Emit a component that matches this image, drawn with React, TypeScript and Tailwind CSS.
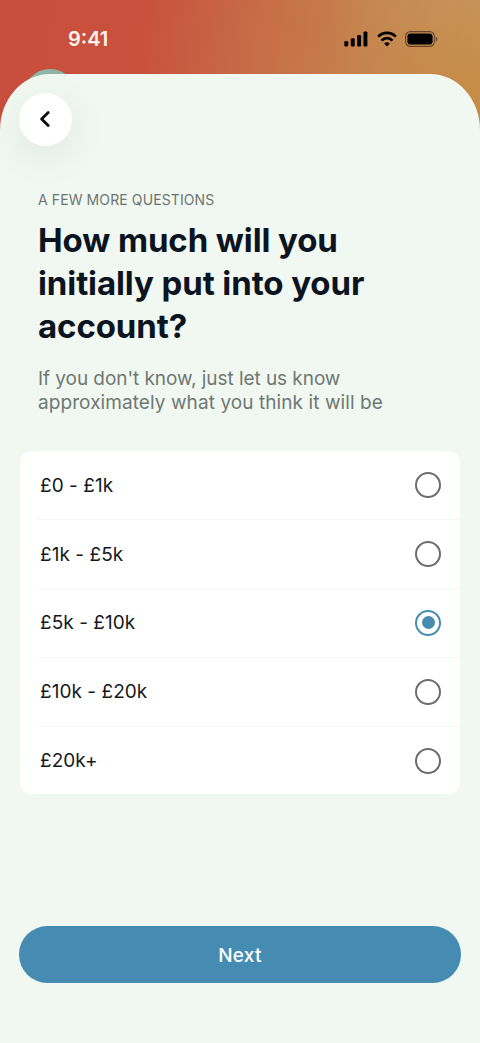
import { useState } from "react";

const OPTIONS = ["£0 - £1k", "£1k - £5k", "£5k - £10k", "£10k - £20k", "£20k+"];

function StatusBar() {
  return (
    <header className="flex h-[74px] items-start justify-between pl-[68px] pr-[42px] pt-[26px]">
      <span className="text-[20px] font-semibold leading-[26px] text-[#fff3ee]">
        9:41
      </span>
      <div className="flex items-center gap-[8px] pt-[4.5px]">
        <svg width="25" height="16" viewBox="0 0 25 16" fill="#000">
          <rect x="0.3" y="10" width="3.9" height="5.5" rx="1.2" />
          <rect x="6.8" y="7.2" width="3.9" height="8.3" rx="1.2" />
          <rect x="13.2" y="4" width="3.9" height="11.5" rx="1.2" />
          <rect x="19.5" y="0.4" width="3.9" height="15.1" rx="1.2" />
        </svg>
        <svg width="20" height="16" viewBox="0 0 21 16" preserveAspectRatio="none" fill="none" stroke="#000" strokeWidth="2.7">
          <path d="M1.2 5.6a13.4 13.4 0 0 1 18.6 0" />
          <path d="M4.8 9.6a8 8 0 0 1 11.4 0" />
          <path d="M10.5 15.4l-3-2.9a4.2 4.2 0 0 1 6 0z" fill="#000" stroke="none" />
        </svg>
        <svg width="33" height="16" viewBox="0 0 33 16">
          <rect x="0.6" y="0.6" width="28.8" height="14.8" rx="4.8" fill="none" stroke="#000" strokeOpacity="0.5" strokeWidth="1.1" />
          <rect x="2.4" y="2.4" width="25.2" height="11.2" rx="3.4" fill="#000" />
          <path d="M30.8 5.4c2 .9 2 4.3 0 5.2z" fill="#000" fillOpacity="0.5" />
        </svg>
      </div>
    </header>
  );
}

function Radio({ checked }: { checked: boolean }) {
  return (
    <span
      className={`flex size-[26px] items-center justify-center rounded-full border-2 ${
        checked ? "border-[#468cb2]" : "border-[#6b6d6e]"
      }`}
    >
      {checked && <span className="size-[13px] rounded-full bg-[#468cb2]" />}
    </span>
  );
}

export default function App() {
  const [selected, setSelected] = useState(2);

  return (
    <div className="relative flex h-[1043px] w-[480px] flex-col overflow-hidden bg-[#c8503c] font-['Inter',sans-serif]">
      <div className="absolute inset-x-0 top-0 h-[140px] bg-[linear-gradient(97deg,#c84f3d_0%,#c8503c_28%,#c76a46_50%,#c6824e_75%,#c69052_100%)]" />
      <div className="absolute right-0 top-0 h-[140px] w-[160px] bg-[linear-gradient(170deg,rgba(198,152,96,0.8)_0%,rgba(198,140,66,0.5)_60%,rgba(198,136,56,0.8)_100%)] [mask-image:linear-gradient(to_right,transparent,black)]" />
      <div className="absolute left-[23px] top-[69px] size-[54px] rounded-full bg-[#8fb5a9]" />
      <div className="relative">
        <StatusBar />
      </div>

      <main className="relative flex flex-1 flex-col rounded-t-[50px_56px] bg-[#f1f8f2] px-[19px] pt-[19px]">
        <button
          type="button"
          aria-label="Back"
          className="flex size-[53px] items-center justify-center rounded-full bg-white pb-px pr-[2px] shadow-[0_10px_40px_rgba(0,0,0,0.08)]"
        >
          <svg width="12" height="18" viewBox="0 0 12 18" fill="none" stroke="#0b0d10" strokeWidth="2.8" strokeLinecap="round" strokeLinejoin="round">
            <path d="M9.2 2.4L2.6 9l6.6 6.6" />
          </svg>
        </button>

        <section className="mt-[44px] px-[19px]">
          <p className="text-[14px] leading-[20px] tracking-[0.1px] text-[#6d7471]">A FEW MORE QUESTIONS</p>
          <h1 className="mt-[9px] whitespace-nowrap text-[33px] font-bold leading-[43px] tracking-[-0.1px] text-[#0b1420]">
            How much will you
            <br />
            initially put into your
            <br />
            account?
          </h1>
          <p className="mt-[19px] whitespace-nowrap text-[19px] leading-[24px] text-[#6f7773]">
            <span className="tracking-[-0.06px]">If you don't know, just let us know</span>
            <br />
            <span className="tracking-[0.08px]">approximately what you think it will be</span>
          </p>
        </section>

        <ul className="mx-px mt-[36px] rounded-[12px] bg-white pl-[18px]">
          {OPTIONS.map((option, i) => (
            <li key={option} className="border-b border-[#f4f5f5] last:border-b-0">
              <button
                type="button"
                role="radio"
                aria-checked={i === selected}
                onClick={() => setSelected(i)}
                className="flex h-[67.9px] w-full items-center justify-between pl-[2px] pr-[19px] text-[19px] tracking-[0.05px] text-[#15191d]"
              >
                <span className="pt-[2px]">{option}</span>
                <Radio checked={i === selected} />
              </button>
            </li>
          ))}
        </ul>

        <button
          type="button"
          className="mb-[60px] mt-auto h-[57px] rounded-full bg-[#468cb2] pt-[3px] text-[19px] font-medium tracking-[0.3px] text-white"
        >
          Next
        </button>
      </main>
    </div>
  );
}
